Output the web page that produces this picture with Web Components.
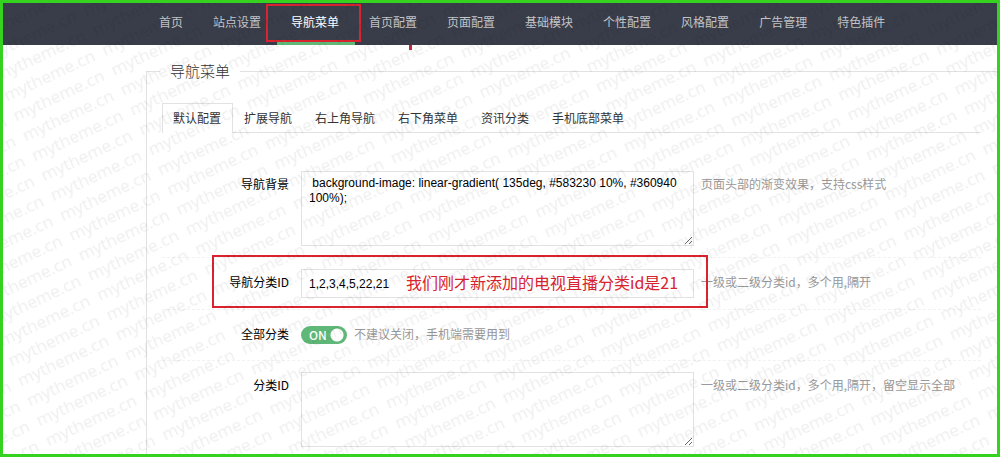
<!DOCTYPE html>
<html lang="zh-CN">
<head>
<meta charset="utf-8">
<title>导航菜单</title>
<style>
body {
  margin: 0;
  background-color: #fff;
  font-family: "Noto Sans CJK SC", sans-serif;
  font-size: 12px;
  line-height: 18px;
  color: #000;
}
</style>
</head>
<body>
<theme-page>
  <top-nav slot="header" active="导航菜单" items="首页,站点设置,导航菜单,首页配置,页面配置,基础模块,个性配置,风格配置,广告管理,特色插件"></top-nav>
  <field-group legend="导航菜单">
    <tab-bar items="默认配置,扩展导航,右上角导航,右下角菜单,资讯分类,手机底部菜单"></tab-bar>
    <form-row type="textarea" label="导航背景" value=" background-image: linear-gradient( 135deg, #583230 10%, #360940 100%);" hint="页面头部的渐变效果，支持css样式"></form-row>
    <form-row type="text" label="导航分类ID" value="1,2,3,4,5,22,21" hint="一级或二级分类id，多个用,隔开"><call-out>我们刚才新添加的电视直播分类id是21</call-out></form-row>
    <form-row type="switch" label="全部分类" hint="不建议关闭，手机端需要用到"></form-row>
    <form-row type="textarea" label="分类ID" value="" hint="一级或二级分类id，多个用,隔开，留空显示全部"></form-row>
  </field-group>
</theme-page>

<script>
// Page template, with the watermark on top of everything.
const pageTemplate = document.createElement('template')
pageTemplate.innerHTML = `
<style>
:host {
  position: relative;
  display: flex;
  flex-direction: column;
  box-sizing: border-box;
  min-height: 100vh;
  border: solid #35d31f 3px;
}

main {
  display: flex;
  flex: 1;
  padding-left: 143px;
}

svg {
  position: absolute;
  inset: 0;
  width: 100%;
  height: 100%;
  pointer-events: none;
}

text {
  font-family: "Open Sans", sans-serif;
  font-size: 17px;
  fill: #000;
  fill-opacity: 0.065;
}
</style>

<slot name="header"></slot>
<main><slot></slot></main>
<svg aria-hidden="true">
  <defs>
    <pattern id="mark" width="108" height="22" patternUnits="userSpaceOnUse" patternTransform="translate(0 350) rotate(-25)">
      <text x="2" y="16">mytheme.cn</text>
    </pattern>
  </defs>
  <rect width="100%" height="100%" fill="url(#mark)"/>
</svg>
`

customElements.define('theme-page',
  /**
   * Represents the page frame.
   */
  class extends HTMLElement {
    constructor () {
      super()
      this.attachShadow({ mode: 'open' })
        .appendChild(pageTemplate.content.cloneNode(true))
    }
  }
)

const navTemplate = document.createElement('template')
navTemplate.innerHTML = `
<style>
:host {
  display: block;
  background-color: #393d49;
}

nav {
  display: flex;
  padding-left: 142px;
}

a {
  position: relative;
  box-sizing: border-box;
  height: 42px;
  padding: 0 16px 0 14px;
  line-height: 38px;
  color: #c4c5c8;
  text-decoration: none;
  white-space: nowrap;
}

a.active {
  color: #fff;
  border-bottom: solid #5fb878 4px;
}

/* Red frame round the current entry */
a.active::before {
  content: '';
  position: absolute;
  inset: 1px -6px -1px -11px;
  border: solid #d9232e 2px;
}

/* Small red mark under the bar */
a.active + a::after {
  content: '';
  position: absolute;
  left: 54px;
  top: 42px;
  width: 3px;
  height: 5px;
  background-color: #c2283f;
}
</style>
<nav></nav>
`

customElements.define('top-nav',
  /**
   * Represents the top navigation.
   */
  class extends HTMLElement {
    constructor () {
      super()
      this.attachShadow({ mode: 'open' })
        .appendChild(navTemplate.content.cloneNode(true))
    }

    /**
     * Called after the element is inserted into the DOM.
     */
    connectedCallback () {
      const nav = this.shadowRoot.querySelector('nav')
      for (const item of this.getAttribute('items').split(',')) {
        const link = document.createElement('a')
        link.href = '#'
        link.textContent = item
        link.classList.toggle('active', item === this.getAttribute('active'))
        nav.appendChild(link)
      }
    }
  }
)

const groupTemplate = document.createElement('template')
groupTemplate.innerHTML = `
<style>
:host {
  display: flex;
  flex: 1;
  min-width: 0;
  padding-top: 16px;
}

fieldset {
  flex: 1;
  min-width: 0;
  margin: 0;
  padding: 22px 16px 0 15px;
  border: solid #e2e2e2;
  border-width: 1px 0 0 1px;
}

legend {
  margin-left: -2px;
  padding: 0 10px;
  font-size: 15px;
  font-weight: 300;
  line-height: 20px;
  color: #333;
}
</style>
<fieldset>
  <legend></legend>
  <slot></slot>
</fieldset>
`

customElements.define('field-group',
  /**
   * Represents a titled group of settings.
   */
  class extends HTMLElement {
    constructor () {
      super()
      this.attachShadow({ mode: 'open' })
        .appendChild(groupTemplate.content.cloneNode(true))
    }

    connectedCallback () {
      this.shadowRoot.querySelector('legend').textContent = this.getAttribute('legend')
    }
  }
)

const tabTemplate = document.createElement('template')
tabTemplate.innerHTML = `
<style>
:host {
  display: block;
  margin-bottom: 27px;
}

div {
  display: flex;
  border-bottom: solid #e2e2e2 1px;
}

button {
  height: 30px;
  margin: 0 0 -1px;
  padding: 0 11px 2px 10px;
  border: solid transparent 1px;
  border-bottom: none;
  background: none;
  font: inherit;
  color: #333;
  white-space: nowrap;
}

button[aria-selected="true"] {
  border-color: #e2e2e2;
  background-color: #fff;
}
</style>
<div role="tablist"></div>
`

customElements.define('tab-bar',
  /**
   * Represents a row of tabs.
   */
  class extends HTMLElement {
    #list

    constructor () {
      super()
      this.attachShadow({ mode: 'open' })
        .appendChild(tabTemplate.content.cloneNode(true))
      this.#list = this.shadowRoot.querySelector('div')
    }

    connectedCallback () {
      this.getAttribute('items').split(',').forEach((item, index) => {
        const tab = document.createElement('button')
        tab.type = 'button'
        tab.setAttribute('role', 'tab')
        tab.textContent = item
        tab.addEventListener('click', () => this.select(index))
        this.#list.appendChild(tab)
      })
      this.select(0)
    }

    /**
     * Select a tab.
     *
     * @param {number} index - The position of the tab.
     */
    select (index) {
      Array.from(this.#list.children).forEach((tab, i) => {
        tab.setAttribute('aria-selected', String(i === index))
      })
    }
  }
)

const rowTemplate = document.createElement('template')
rowTemplate.innerHTML = `
<style>
:host {
  position: relative;
  display: flex;
  align-items: flex-start;
  padding: 11px 0;
  border-bottom: dashed #f2f2f2 1px;
}

:host(:last-of-type) {
  border-bottom: none;
  padding-bottom: 6px;
}

label {
  flex: none;
  width: 127px;
  margin-right: 12px;
  padding-top: 4px;
  text-align: right;
}

.hint {
  margin-left: 7px;
  padding-top: 4px;
  color: #999;
  white-space: nowrap;
}

textarea,
input[type="text"] {
  box-sizing: border-box;
  width: 393px;
  height: 29px;
  margin: 0;
  padding: 4px 7px;
  border: solid #e2e2e2 1px;
  background-color: transparent;
  font-family: "Liberation Sans", "Noto Sans CJK SC", sans-serif;
  font-size: 12px;
  line-height: 15px;
  color: #000;
}

textarea {
  height: 75px;
}

.switch {
  position: relative;
  height: 28px;
  display: flex;
  align-items: center;
}

.switch input {
  appearance: none;
  width: 46px;
  height: 18px;
  margin: 0;
  border-radius: 9px;
  background: radial-gradient(circle at 36px 9px, #fff 6px, transparent 7px) #d2d2d2;
}

.switch input:checked {
  background-color: #5fb878;
}

.switch span {
  position: absolute;
  left: 8px;
  font-weight: 500;
  color: #fff;
  pointer-events: none;
}
</style>
<label for="control"></label>
<div id="field"></div>
<div class="hint"></div>
<slot></slot>
`

customElements.define('form-row',
  /**
   * Represents one setting: a label, a control and a hint.
   */
  class extends HTMLElement {
    constructor () {
      super()
      this.attachShadow({ mode: 'open' })
        .appendChild(rowTemplate.content.cloneNode(true))
    }

    connectedCallback () {
      this.shadowRoot.querySelector('label').textContent = this.getAttribute('label')
      this.shadowRoot.querySelector('.hint').textContent = this.getAttribute('hint')
      this.createControl(this.getAttribute('type'))
    }

    /**
     * Create the control.
     *
     * @param {string} type - The type of control.
     */
    createControl (type) {
      const field = this.shadowRoot.querySelector('#field')
      const control = document.createElement(type === 'textarea' ? 'textarea' : 'input')
      control.id = 'control'
      field.style.display = 'flex'
      field.appendChild(control)

      if (type === 'switch') {
        const text = document.createElement('span')
        control.type = 'checkbox'
        control.checked = true
        text.textContent = 'ON'
        field.className = 'switch'
        field.appendChild(text)
      } else {
        if (type === 'text') {
          control.type = 'text'
        }
        control.value = this.getAttribute('value')
      }
    }
  }
)

const callOutTemplate = document.createElement('template')
callOutTemplate.innerHTML = `
<style>
/* Lies over the row it marks */
:host {
  position: absolute;
  left: 50px;
  top: -3px;
  box-sizing: border-box;
  width: 496px;
  height: 53px;
  padding-left: 192px;
  border: solid #d9232e 2px;
  font-size: 16px;
  line-height: 50px;
  color: #d9232e;
  white-space: nowrap;
  text-shadow: 0 0 2px #fff, 0 0 2px #fff, 0 0 3px #fff;
  pointer-events: none;
}
</style>
<slot></slot>
`

customElements.define('call-out',
  /**
   * Represents a red frame with a remark in it.
   */
  class extends HTMLElement {
    constructor () {
      super()
      this.attachShadow({ mode: 'open' })
        .appendChild(callOutTemplate.content.cloneNode(true))
    }
  }
)
</script>
</body>
</html>
